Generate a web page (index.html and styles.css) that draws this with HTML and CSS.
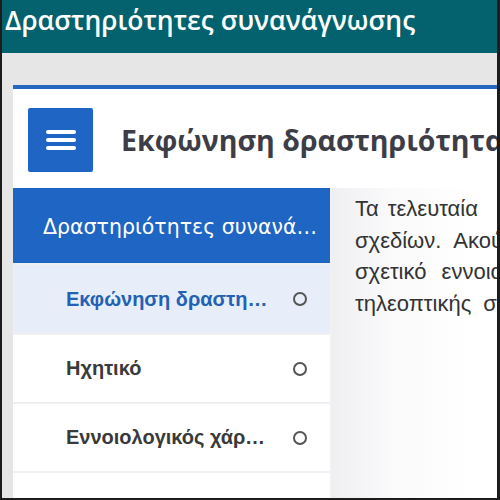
FILE: index.html
```html
<!DOCTYPE html>
<html lang="el">
<head>
<meta charset="utf-8">
<title>Δραστηριότητες συνανάγνωσης</title>
<link rel="stylesheet" href="styles.css">
</head>
<body>
<div class="frame">
  <header class="topbar">Δραστηριότητες συνανάγνωσης</header>
  <div class="band">
    <section class="card">
      <div class="card-head">
        <button class="menu-btn" aria-label="Μενού">
          <svg width="32" height="24" viewBox="0 0 32 24"><rect x="1" y="2" width="30" height="4" rx="2" fill="#fff"/><rect x="1" y="10" width="30" height="4" rx="2" fill="#fff"/><rect x="1" y="18" width="30" height="4" rx="2" fill="#fff"/></svg>
        </button>
        <h1 class="title">Εκφώνηση δραστηριότητας</h1>
      </div>
      <div class="layout">
        <nav class="sidebar">
          <div class="nav-top"><span class="ellip">Δραστηριότητες συνανάγνωσης</span></div>
          <div class="nav-item active"><span class="ellip">Εκφώνηση δραστηριότητας</span><span class="dot"></span></div>
          <div class="nav-item"><span class="ellip">Ηχητικό</span><span class="dot"></span></div>
          <div class="nav-item"><span class="ellip">Εννοιολογικός χάρτης</span><span class="dot"></span></div>
          <div class="nav-item"><span class="ellip">&nbsp;</span></div>
        </nav>
        <main class="content">
          <div class="line line-1">Τα τελευταία &nbsp; &nbsp; &nbsp; χρόνια</div>
          <div class="line line-2">σχεδίων. Ακούστε το ηχητικό</div>
          <div class="line line-3">σχετικό εννοιολογικό χάρτη</div>
          <div class="line line-4">τηλεοπτικής σειράς</div>
        </main>
      </div>
    </section>
  </div>
</div>
</body>
</html>
```

FILE: styles.css
```css
html, body {
  margin: 0;
  padding: 0;
}
body {
  width: 500px;
  height: 500px;
  overflow: hidden;
  font-family: "Liberation Sans", Arial, sans-serif;
}
.frame {
  box-sizing: border-box;
  width: 500px;
  height: 500px;
  overflow: hidden;
  border: 2px solid #1c1c1c;
  border-top: 0;
  border-right-width: 3px;
  background: #e6e6e6;
  display: flex;
  flex-direction: column;
}
.topbar {
  flex: none;
  height: 53px;
  box-sizing: border-box;
  background: #03626d;
  color: #fff;
  font-family: "Open Sans", sans-serif;
  font-size: 26.5px;
  font-weight: 600;
  line-height: 40px;
  padding: 0 0 0 3px;
  white-space: nowrap;
}
.band {
  flex: 1;
  padding: 32px 0 0 11px;
  min-height: 0;
}
.card {
  width: 700px;
  height: 100%;
  background: #fff;
  border-top: 4px solid #2566c1;
  box-sizing: border-box;
}
.card-head {
  display: flex;
  align-items: center;
  gap: 28px;
  padding: 19px 0 16px 15px;
}
.menu-btn {
  width: 65px;
  height: 64px;
  border: 0;
  border-radius: 2px;
  background: #1f65c3;
  display: flex;
  align-items: center;
  justify-content: center;
  padding: 0;
}
.title {
  margin: 0;
  font-family: "Open Sans", sans-serif;
  font-weight: 700;
  font-size: 28.5px;
  color: #3d3d47;
  white-space: nowrap;
}
.layout {
  display: grid;
  grid-template-columns: 317px 1fr;
  column-gap: 2px;
  background: #f1f1f3;
  height: 400px;
}
.sidebar {
  display: flex;
  flex-direction: column;
  gap: 2px;
  background: #f0f0f2;
}
.nav-top {
  height: 75px;
  background: #1f65c3;
  color: #fff;
  font-family: "DejaVu Sans", sans-serif;
  font-size: 20.5px;
  display: flex;
  align-items: center;
  padding: 2px 6px 0 30px;
  box-sizing: border-box;
}
.ellip {
  flex: 1;
  min-width: 0;
  white-space: nowrap;
  overflow: hidden;
  text-overflow: ellipsis;
}
.nav-item {
  height: 67px;
  background: #fff;
  display: flex;
  align-items: center;
  gap: 24px;
  padding: 0 23px 0 53px;
  font-size: 20px;
  font-weight: 700;
  color: #3a3a3a;
}
.nav-item.active {
  height: 68px;
  background: #e7eef9;
  color: #2361b4;
}
.dot {
  flex: none;
  width: 10px;
  height: 10px;
  border: 2px solid #555;
  border-radius: 50%;
}
.content {
  background: linear-gradient(to right, #efeff2 0px, #fafafb 60px, #fff 140px);
  padding: 5px 0 0 23px;
  font-family: "Liberation Sans", Arial, sans-serif;
  font-size: 22px;
  line-height: 31.5px;
  color: #333;
  white-space: nowrap;
}
.line-1 { word-spacing: 3px; }
.line-2 { word-spacing: 7px; }
.line-3 { word-spacing: 9px; }
.line-4 { word-spacing: 6px; }
```
